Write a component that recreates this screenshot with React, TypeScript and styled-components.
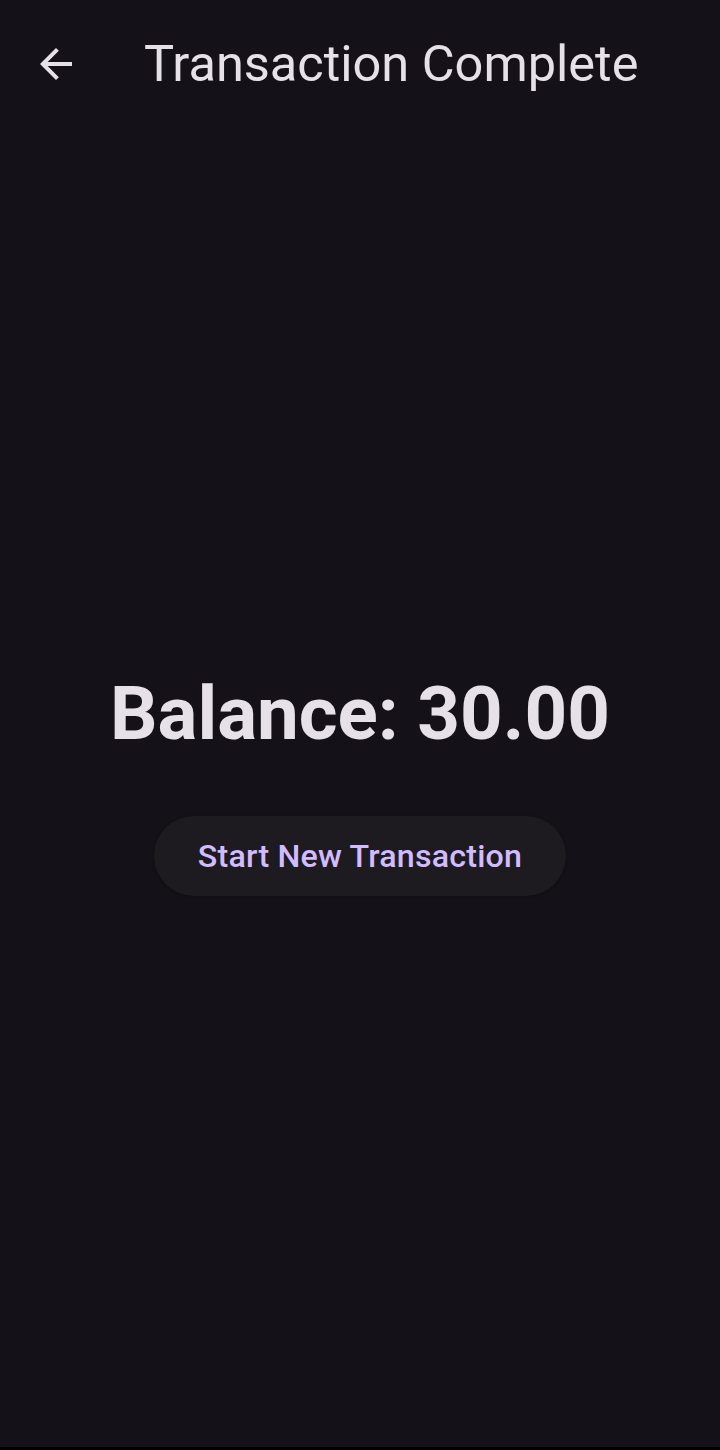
import * as React from 'react'

import styled, { createGlobalStyle } from 'styled-components'

const GlobalStyle = createGlobalStyle`
  html,
  body {
    margin: 0;
    padding: 0;
    background: #000;
  }

  body {
    font-family: Roboto, 'Noto Sans', sans-serif;
  }
`

export default function App() {
  return (
    <>
      <GlobalStyle />
      <Screen>
        <AppBar>
          <BackButton aria-label="Back">
            <svg width="32" height="32" viewBox="0 0 16 16" fill="none">
              <path
                d="M16 7H3.83l5.59-5.59L8 0 0 8l8 8 1.41-1.41L3.83 9H16V7z"
                fill="currentColor"
              />
            </svg>
          </BackButton>
          <Title>Transaction Complete</Title>
        </AppBar>
        <Body>
          <Balance>Balance: 30.00</Balance>
          <PillButton>Start New Transaction</PillButton>
        </Body>
      </Screen>
    </>
  )
}

const Screen = styled.div`
  display: flex;
  flex-direction: column;
  height: 1447px;

  background: #141218;
  color: #e6e0e9;
`

const AppBar = styled.header`
  display: flex;
  align-items: center;
  flex-shrink: 0;
  height: 128px;
`

const BackButton = styled.button`
  display: flex;
  align-items: center;
  justify-content: center;
  width: 112px;
  height: 112px;
  padding: 0;

  color: #e6e0e9;
  background: none;
  border: 0;
`

const Title = styled.h1`
  margin: 0 0 0 32px;

  font-size: 50.5px;
  font-weight: 400;
  line-height: 64px;
`

const Body = styled.main`
  display: flex;
  flex: 1;
  flex-direction: column;
  align-items: center;
  justify-content: center;
  padding-bottom: 11px;
`

const Balance = styled.div`
  font-size: 74.5px;
  font-weight: 700;
  line-height: 91px;
`

const PillButton = styled.button`
  height: 80px;
  margin-top: 57px;
  padding: 0 44px;

  font-family: Roboto, 'Noto Sans', sans-serif;
  font-size: 32.2px;
  font-weight: 500;
  letter-spacing: 0.2px;
  color: #d0bcff;

  background: #1d1b20;
  border: 0;
  border-radius: 40px;
  box-shadow: 0 1px 3px rgba(0, 0, 0, 0.3);
`
